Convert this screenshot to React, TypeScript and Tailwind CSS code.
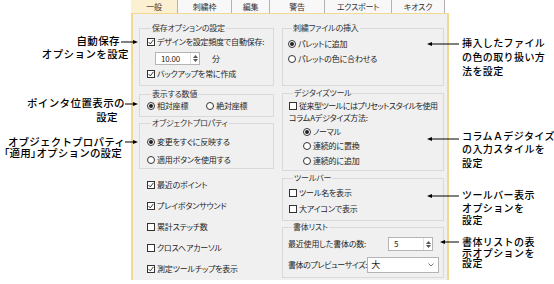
import React from 'react';

const ui = "font-['Noto_Sans_CJK_JP','Noto_Sans',sans-serif] [font-feature-settings:'palt'] text-[8px] tracking-[-0.2px] whitespace-nowrap text-[#1e1e1e]";
const note = "font-['Noto_Sans_CJK_JP','Noto_Sans',sans-serif] font-medium whitespace-nowrap text-black";

const tabs = [
  { label: '一般', w: 'w-[47px]', active: true },
  { label: '刺繍枠', w: 'w-[54px]' },
  { label: '編集', w: 'w-[38px]' },
  { label: '警告', w: 'w-[55px]' },
  { label: 'エクスポート', w: 'w-[67px]' },
  { label: 'キオスク', w: 'w-[53px]' },
];

function Check({ on = false }: { on?: boolean }) {
  return (
    <span className="flex h-[8px] w-[8px] shrink-0 items-center justify-center border border-[#333] bg-white">
      {on && (
        <svg width="6" height="6" viewBox="0 0 6 6" aria-hidden>
          <path d="M0.6 3.1 L2.3 4.9 L5.4 0.9" fill="none" stroke="#222" strokeWidth="0.9" />
        </svg>
      )}
    </span>
  );
}

function Radio({ on = false }: { on?: boolean }) {
  return (
    <span className="flex h-[8px] w-[8px] shrink-0 items-center justify-center rounded-full border border-[#333] bg-white">
      {on && <span className="h-[4px] w-[4px] rounded-full bg-[#222]" />}
    </span>
  );
}

function Row({ children, className = '' }: { children: React.ReactNode; className?: string }) {
  return <div className={'flex h-[12px] items-center gap-[2px] leading-[12px] ' + className}>{children}</div>;
}

function Group({ title, className, children }: { title: string; className: string; children?: React.ReactNode }) {
  return (
    <div className={'flex flex-col border border-[#d9d9d9] ' + className}>
      <div className="-mt-[6px] ml-[4px] h-[10px] w-fit bg-[#f0f0f0] px-[1px] leading-[10px] text-[#333]">{title}</div>
      {children}
    </div>
  );
}

function Spin({ value, className }: { value: string; className: string }) {
  return (
    <div className={'flex border border-[#b4b4b4] bg-white ' + className}>
      <span className="flex-1 pl-[5px] leading-[12px]">{value}</span>
      <span className="flex w-[9px] flex-col items-center justify-center gap-[1px] border-l border-[#e2e2e2]">
        <svg width="5" height="3" viewBox="0 0 5 3" aria-hidden>
          <path d="M0 3 L2.5 0 L5 3 Z" fill="#555" />
        </svg>
        <svg width="5" height="3" viewBox="0 0 5 3" aria-hidden>
          <path d="M0 0 L2.5 3 L5 0 Z" fill="#555" />
        </svg>
      </span>
    </div>
  );
}

function ArrowRight({ className, w }: { className: string; w: number }) {
  return (
    <svg className={'absolute ' + className} width={w} height="6" viewBox={`0 0 ${w} 6`} aria-hidden>
      <line x1="0" y1="3" x2={w - 3} y2="3" stroke="#000" strokeWidth="1" />
      <path d={`M${w - 5} 1 L${w} 3 L${w - 5} 5 Z`} fill="#000" />
    </svg>
  );
}

function ArrowLeft({ className, w }: { className: string; w: number }) {
  return (
    <svg className={'absolute ' + className} width={w} height="6" viewBox={`0 0 ${w} 6`} aria-hidden>
      <line x1="3" y1="3" x2={w} y2="3" stroke="#000" strokeWidth="1" />
      <path d="M5 1 L0 3 L5 5 Z" fill="#000" />
    </svg>
  );
}

export default function App() {
  return (
    <div className="relative flex h-[284px] w-[554px] overflow-hidden bg-white">
      <div className="w-[131px] shrink-0" />

      <div className={'flex w-[318px] shrink-0 flex-col ' + ui}>
        {/* タブ */}
        <div className="flex h-[13px]">
          {tabs.map((t) => (
            <div
              key={t.label}
              className={
                t.w +
                ' h-[13px] border-r border-[#b3b3b3] text-center leading-[13px] text-[#333] ' +
                (t.active ? 'bg-[#fcf0d2]' : 'bg-[#f8f8f8]')
              }
            >
              {t.label}
            </div>
          ))}
        </div>

        <div className="flex h-[267px] gap-[8px] border-t border-r-2 border-l-2 border-[#f3d88f] bg-[#f0f0f0] pl-[6px]">
          {/* 左列 */}
          <div className="flex w-[135px] flex-col">
            <Group title="保存オプションの設定" className="mt-[14px] h-[58px] pl-[7px]">
              <Row className="mt-[3px]">
                <Check on />
                <span>デザインを設定頻度で自動保存:</span>
              </Row>
              <div className="mt-[4px] flex items-center">
                <Spin value="10.00" className="ml-[8px] h-[13px] w-[45px]" />
                <span className="ml-[12px]">分</span>
              </div>
              <Row className="mt-[3px]">
                <Check on />
                <span>バックアップを常に作成</span>
              </Row>
            </Group>

            <Group title="表示する数値" className="mt-[8px] h-[23px] pl-[7px]">
              <Row className="mt-[1px]">
                <Radio on />
                <span>相対座標</span>
                <span className="ml-[16px] flex items-center gap-[2px]">
                  <Radio />
                  <span>絶対座標</span>
                </span>
              </Row>
            </Group>

            <Group title="オブジェクトプロパティ" className="mt-[6px] h-[46px] pl-[7px]">
              <Row className="mt-[8px]">
                <Radio on />
                <span>変更をすぐに反映する</span>
              </Row>
              <Row className="mt-[6px]">
                <Radio />
                <span>適用ボタンを使用する</span>
              </Row>
            </Group>

            <div className="flex flex-col gap-[9px] pt-[10px] pl-[8px]">
              <Row>
                <Check on />
                <span>最近のポイント</span>
              </Row>
              <Row>
                <Check on />
                <span>プレイボタンサウンド</span>
              </Row>
              <Row>
                <Check />
                <span>累計ステッチ数</span>
              </Row>
              <Row>
                <Check />
                <span>クロスヘアカーソル</span>
              </Row>
              <Row>
                <Check on />
                <span>測定ツールチップを表示</span>
              </Row>
            </div>
          </div>

          {/* 右列 */}
          <div className="flex w-[162px] flex-col">
            <Group title="刺繍ファイルの挿入" className="mt-[14px] h-[58px] pl-[5px]">
              <Row className="mt-[5px]">
                <Radio on />
                <span>パレットに追加</span>
              </Row>
              <Row className="mt-[3px]">
                <Radio />
                <span>パレットの色に合わせる</span>
              </Row>
            </Group>

            <Group title="デジタイズツール" className="mt-[7px] h-[78px] pl-[6px]">
              <Row className="mt-[2px]">
                <Check />
                <span className="tracking-[-0.5px]">従来型ツールにはプリセットスタイルを使用</span>
              </Row>
              <div className="mt-[1px] h-[10px] leading-[10px]">コラムAデジタイズ方法:</div>
              <Row className="mt-[3px] pl-[14px]">
                <Radio on />
                <span>ノーマル</span>
              </Row>
              <Row className="mt-[2px] pl-[14px]">
                <Radio />
                <span>連続的に置換</span>
              </Row>
              <Row className="mt-[3px] pl-[14px]">
                <Radio />
                <span>連続的に追加</span>
              </Row>
            </Group>

            <Group title="ツールバー" className="mt-[7px] h-[43px] pl-[6px]">
              <Row className="mt-[4px]">
                <Check />
                <span>ツール名を表示</span>
              </Row>
              <Row className="mt-[4px]">
                <Check />
                <span>大アイコンで表示</span>
              </Row>
            </Group>

            <Group title="書体リスト" className="mt-[6px] h-[51px] pr-[10px] pl-[5px]">
              <div className="mt-[5px] flex h-[14px] items-center">
                <span>最近使用した書体の数:</span>
                <Spin value="5" className="ml-auto h-[14px] w-[45px]" />
              </div>
              <div className="mt-[6px] flex h-[16px] items-center">
                <span className="tracking-[-0.4px]">書体のプレビューサイズ:</span>
                <div className="ml-auto flex h-[16px] w-[72px] shrink-0 items-center border border-[#b4b4b4] bg-white pr-[4px] pl-[3px]">
                  <span className="flex-1 text-[9px]">大</span>
                  <svg width="6" height="4" viewBox="0 0 6 4" aria-hidden>
                    <path d="M0.5 0.5 L3 3 L5.5 0.5" fill="none" stroke="#666" strokeWidth="0.9" />
                  </svg>
                </div>
              </div>
            </Group>
          </div>
        </div>
      </div>

      {/* 左の注記 */}
      <div className={'absolute top-[34px] left-0 w-[129px] text-right text-[10.5px] leading-[13px] tracking-[0.4px] ' + note}>
        <div className="pr-[9px]">自動保存</div>
        <div>オプションを設定</div>
      </div>
      <ArrowRight className="top-[39px] left-[121px]" w={17} />

      <div className={'absolute top-[96px] left-0 w-[129px] text-right text-[10.5px] leading-[14px] tracking-[0.4px] ' + note}>
        <div className="pr-[4px]">ポインタ位置表示の</div>
        <div className="pr-[11px]">設定</div>
      </div>
      <ArrowRight className="top-[101px] left-[125px]" w={13} />

      <div className={'absolute top-[136px] left-0 w-[129px] text-right text-[10.5px] leading-[11px] tracking-[0.2px] ' + note}>
        <div className="pr-[4px]">オブジェクトプロパティ</div>
        <div className="pr-[7px]">
          <span className="[font-feature-settings:'palt']">「適用」</span>オプションの設定
        </div>
      </div>
      <ArrowRight className="top-[139px] left-[125px]" w={13} />

      {/* 右の注記 */}
      <div className={'absolute top-[36px] left-[462px] text-[10px] leading-[14px] tracking-[0.4px] ' + note}>
        <div>挿入したファイル</div>
        <div>の色の取り扱い方</div>
        <div>法を設定</div>
      </div>
      <ArrowLeft className="top-[41px] left-[427px]" w={32} />

      <div className={'absolute top-[129px] left-[462px] text-[10px] leading-[13.3px] tracking-[0.4px] ' + note}>
        <div>コラムＡデジタイズ</div>
        <div>の入力スタイルを</div>
        <div>設定</div>
      </div>
      <ArrowLeft className="top-[136px] left-[427px]" w={32} />

      <div className={'absolute top-[189px] left-[462px] text-[10px] leading-[12.5px] tracking-[0.4px] ' + note}>
        <div>ツールバー表示</div>
        <div>オプションを</div>
        <div>設定</div>
      </div>
      <ArrowLeft className="top-[193px] left-[427px]" w={32} />

      <div className={'absolute top-[237px] left-[462px] text-[10px] leading-[10.7px] tracking-[0.4px] ' + note}>
        <div>書体リストの表</div>
        <div>示オプションを</div>
        <div>設定</div>
      </div>
      <ArrowLeft className="top-[239px] left-[440px]" w={19} />
    </div>
  );
}
